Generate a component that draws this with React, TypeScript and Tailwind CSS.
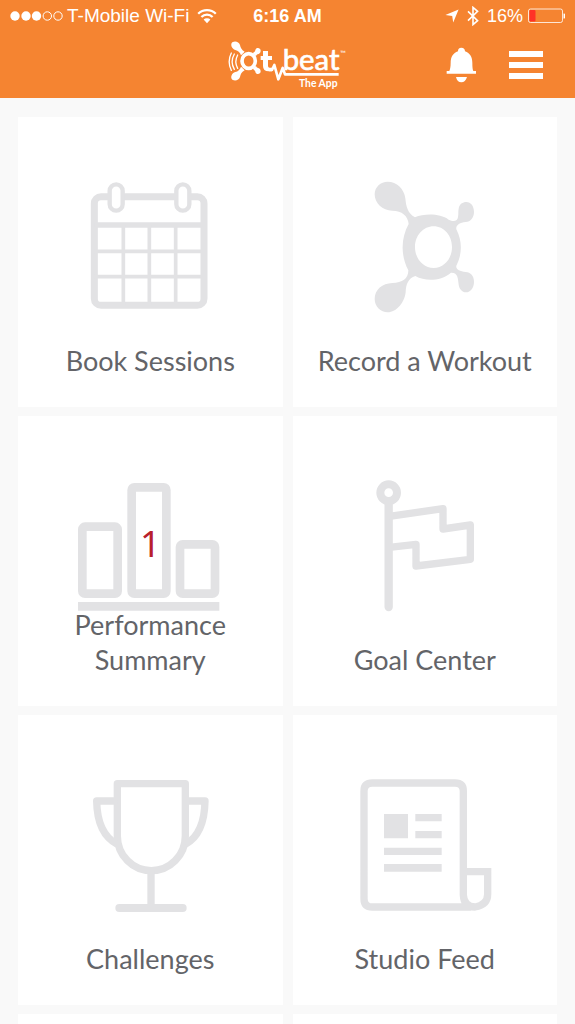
import type { ReactNode } from "react";

const SignalDots = () => (
  <svg viewBox="0 0 53 12" className="h-3 w-[53px]" aria-label="Signal strength 3 of 5" role="img">
    <g fill="#fff">
      <circle cx="5" cy="6" r="4.7" />
      <circle cx="16" cy="6" r="4.7" />
      <circle cx="26.500" cy="6" r="4.7" />
    </g>
    <g fill="none" stroke="#fff" strokeWidth="1">
      <circle cx="37.300" cy="6" r="4.200" />
      <circle cx="48" cy="6" r="4.200" />
    </g>
  </svg>
);

const Wifi = () => (
  <svg viewBox="0 0 20 16" className="h-4 w-5" aria-hidden="true">
    <g fill="none" stroke="#fff" strokeWidth="2.300">
      <path d="M1.200 5.800a12.400 12.400 0 0 1 17.600 0" />
      <path d="M4.400 9a7.900 7.900 0 0 1 11.200 0" />
    </g>
    <path d="M10 15.200 6.600 11.600a4.700 4.700 0 0 1 6.800 0z" fill="#fff" />
  </svg>
);

const LocationArrow = () => (
  <svg viewBox="0 0 14 14" className="h-3.5 w-3.5" aria-hidden="true">
    <path d="M13.600 .4 8.200 13.600 7.200 7 .4 6z" fill="#fff" />
  </svg>
);

const Bluetooth = () => (
  <svg viewBox="0 0 12 20" className="h-5 w-3" aria-hidden="true">
    <path d="M1 5.400 10.600 14.600 6 18.600V1.400l4.600 4L1 14.600" fill="none" stroke="#fff" strokeWidth="1.600" />
  </svg>
);

const Battery = () => (
  <svg viewBox="0 0 38 16" className="h-4 w-[38px]" aria-hidden="true">
    <rect x="1.500" y="1" width="34" height="13.500" rx="2" fill="none" stroke="#fff" strokeOpacity="0.8" />
    <rect x="2.500" y="2" width="6" height="11.500" rx="1" fill="#ff3127" />
    <path d="M36.500 5.500a2.400 2.400 0 0 1 0 5z" fill="#fff" />
  </svg>
);

const Logo = () => (
  <svg viewBox="39 24 360 156" className="h-[52px] w-[120px]" role="img" aria-label="OT beat The App">
    <g fill="none" stroke="#fff" strokeLinecap="round">
      <path d="M68 72q-11 20 0 40" strokeWidth="4" />
      <path d="M58 69q-13 23 0 46" strokeWidth="4" />
      <path d="M49 66q-13 26 0 52" strokeWidth="4" />
      <ellipse cx="101" cy="90" rx="20" ry="22" strokeWidth="11" />
    </g>
    <g fill="#fff">
      <path d="M52 34c8-5 20-2 23 8 2 8 4 14 14 20l-11 11c-3-9-9-14-17-16-11-3-16-17-9-23z" />
      <path d="M52 146c8 5 20 2 23-8 2-8 4-14 14-20l-11-11c-3 9-9 14-17 16-11 3-16 17-9 23z" />
      <path d="M113 67c6-4 8-7 9-12 3-6 15-5 15 4 0 8-5 9-9 11-3 1-4 3-5 6z" />
      <path d="M113 113c6 4 8 7 9 12 3 6 15 5 15-4 0-8-5-9-9-11-3-1-4-3-5-6z" />
      <path d="M144 60h15v15h12v12h-12v18q0 5 5 5h7v11h-10q-17 0-17-16V87h-7V75h7z" />
    </g>
    <path
      d="M162 117h9l7-15 12 43 13-34 7 19h161"
      fill="none"
      stroke="#fff"
      strokeWidth="8"
      strokeLinejoin="round"
    />
    <text x="203" y="118" fill="#fff" stroke="#fff" strokeWidth="2" fontSize="88" className="font-['Lato',sans-serif]">
      beat
    </text>
    <text x="252" y="167" fill="#fff" fontSize="31" className="font-['Lato',sans-serif] font-bold">
      The App
    </text>
    <text x="376" y="74" fill="#fff" fontSize="22" className="font-['Lato',sans-serif]">
      ™
    </text>
  </svg>
);

const Bell = () => (
  <svg viewBox="78 138 93 108" className="h-9 w-[31px]" aria-hidden="true">
    <path
      d="M124 140c7 0 11 4 11 11 15 5 22 18 22 34 0 14 1 20 3 25h8v8H80v-8h8c2-5 4-11 4-25 0-16 7-29 22-34 0-7 3-11 10-11zM108 228h33c-3 10-9 16-17 16s-14-6-16-16z"
      fill="#fff"
    />
  </svg>
);

const Menu = () => (
  <svg viewBox="0 0 34 28" className="h-7 w-[34px]" aria-hidden="true">
    <path d="M0 0h34v6H0zM0 11h34v6H0zM0 22h34v6H0z" fill="#fff" />
  </svg>
);

const TileIcon = ({ viewBox, children }: { viewBox: string; children: ReactNode }) => (
  <svg
    viewBox={viewBox}
    className="h-[136px] w-40 overflow-visible"
    fill="none"
    stroke="#e2e2e4"
    strokeWidth="22"
    strokeLinejoin="round"
    aria-hidden="true"
  >
    {children}
  </svg>
);

const CalendarIcon = () => (
  <TileIcon viewBox="0 24 480 408">
    <rect x="73" y="95" width="329" height="326" rx="20" strokeWidth="21" />
    <path d="M73 180H402" strokeWidth="17" />
    <path d="M160 180V420M238 180V420M317 180V420M73 259H402M73 335H402" strokeWidth="11" />
    <rect x="119" y="58" width="39" height="79" rx="19.500" strokeWidth="13" fill="#fff" />
    <rect x="319" y="58" width="39" height="79" rx="19.500" strokeWidth="13" fill="#fff" />
  </TileIcon>
);

const OrbitIcon = () => (
  <TileIcon viewBox="-30 24 480 408">
    <g fill="#e2e2e4" stroke="none">
      <path
        fillRule="evenodd"
        d="M98 50C125 50 148 72 151 100C153 123 158 146 180 157C206 146 254 144 281 164C296 172 308 168 309 156C311 145 309 139 311 131C313 117 323 111 334 111C348 111 357 124 357 140C357 158 347 170 332 171C314 173 302 180 304 193C322 228 322 267 304 302C302 313 314 319 332 321C347 322 357 333 357 350C357 368 347 382 333 382C321 382 313 371 311 359C309 341 309 322 288 323C256 349 212 350 181 333C160 340 153 357 152 382C149 412 125 442 98 442C77 442 59 424 59 402C59 374 82 355 112 354C142 353 160 342 160 316C137 273 137 220 161 177C159 153 141 137 112 137C82 136 59 115 59 88C59 66 77 50 98 50ZM236 184C205 184 180 211 180 246C180 281 205 309 236 309C267 309 291 281 291 246C291 211 267 184 236 184Z"
      />
    </g>
  </TileIcon>
);

const ChartIcon = () => (
  <TileIcon viewBox="30 6 480 408">
    <g strokeWidth="26">
      <rect x="67" y="170" width="106" height="201" rx="8" />
      <rect x="215" y="52" width="104" height="319" rx="8" />
      <rect x="360" y="223" width="105" height="148" rx="8" />
      <path d="M54 409H478" />
    </g>
  </TileIcon>
);

const FlagIcon = () => (
  <TileIcon viewBox="-30 6 480 408">
    <circle cx="101" cy="68" r="25" strokeWidth="24" />
    <path d="M101 94V411" strokeWidth="25" strokeLinecap="round" />
    <path d="M103 139 264 116V177L346 165V268L183 288V223L103 232" />
  </TileIcon>
);

const TrophyIcon = () => (
  <TileIcon viewBox="-15 18 480 408">
    <path d="M127 56H331V212C331 272 284 317 229 317C174 317 127 272 127 212Z" />
    <path d="M127 108H65C66 172 85 216 127 238M331 108H390C389 172 372 216 331 238" />
    <path d="M228 317V429" />
    <path d="M133 429H323" strokeWidth="24" strokeLinecap="round" />
  </TileIcon>
);

const FeedIcon = () => (
  <TileIcon viewBox="0 18 480 408">
    <path
      d="M378 426H82Q57 426 57 401V78Q57 54 82 54H330Q355 54 355 78V390Q357 426 390 426Q428 420 428 388V320H355"
      strokeLinejoin="miter"
    />
    <g fill="#e2e2e4" stroke="none">
      <path d="M117 147h72v73h-72zM211 147h79v22h-79zM211 198h79v22h-79zM117 248h173v22H117zM117 297h173v23H117z" />
    </g>
  </TileIcon>
);

type Tile = { label: string; icon: ReactNode; badge?: string };

const tiles: Tile[] = [
  { label: "Book Sessions", icon: <CalendarIcon /> },
  { label: "Record a Workout", icon: <OrbitIcon /> },
  { label: "Performance Summary", icon: <ChartIcon />, badge: "1" },
  { label: "Goal Center", icon: <FlagIcon /> },
  { label: "Challenges", icon: <TrophyIcon /> },
  { label: "Studio Feed", icon: <FeedIcon /> },
];

const TileLink = ({ label, icon, badge }: Tile) => (
  <a href="#" className="flex min-h-[290px] flex-col items-center bg-white px-4 pt-14 pb-[29px]">
    <span className="relative block h-[135px]">
      {icon}
      {badge && (
        <span className="absolute inset-0 flex items-center justify-center pt-2 font-['Noto_Sans',sans-serif] text-4xl text-[#b8202c]">
          {badge}
        </span>
      )}
    </span>
    <span className="mt-auto max-w-56 text-center text-[27px] leading-[35px] text-[#636468]">{label}</span>
  </a>
);

export default function App() {
  return (
    <div className="h-screen overflow-hidden bg-[#f9f9f9] font-['Lato',sans-serif]">
      <header className="bg-[#f58431] text-white">
        <div className="grid h-8 grid-cols-[1fr_auto_1fr] items-center px-2.5 font-['Liberation_Sans',sans-serif] text-[19px]">
          <div className="flex items-center gap-2">
            <div className="flex items-center gap-1">
              <SignalDots />
              <span className="whitespace-nowrap">T-Mobile Wi-Fi</span>
            </div>
            <Wifi />
          </div>
          <span className="text-lg font-bold">6:16 AM</span>
          <div className="flex items-center justify-end gap-2">
            <LocationArrow />
            <Bluetooth />
            <div className="flex items-center gap-1">
              <span className="text-lg">16%</span>
              <Battery />
            </div>
          </div>
        </div>
        <div className="grid h-[66px] grid-cols-[1fr_auto_1fr] items-center px-8">
          <div />
          <Logo />
          <div className="flex items-center justify-end gap-8">
            <button type="button" aria-label="Notifications">
              <Bell />
            </button>
            <button type="button" aria-label="Menu">
              <Menu />
            </button>
          </div>
        </div>
      </header>
      <main className="grid grid-cols-2 gap-x-2.5 gap-y-[9px] px-[18px] pt-[19px]">
        {tiles.map((tile) => (
          <TileLink key={tile.label} {...tile} />
        ))}
        <div className="h-[290px] bg-white" />
        <div className="h-[290px] bg-white" />
      </main>
    </div>
  );
}
